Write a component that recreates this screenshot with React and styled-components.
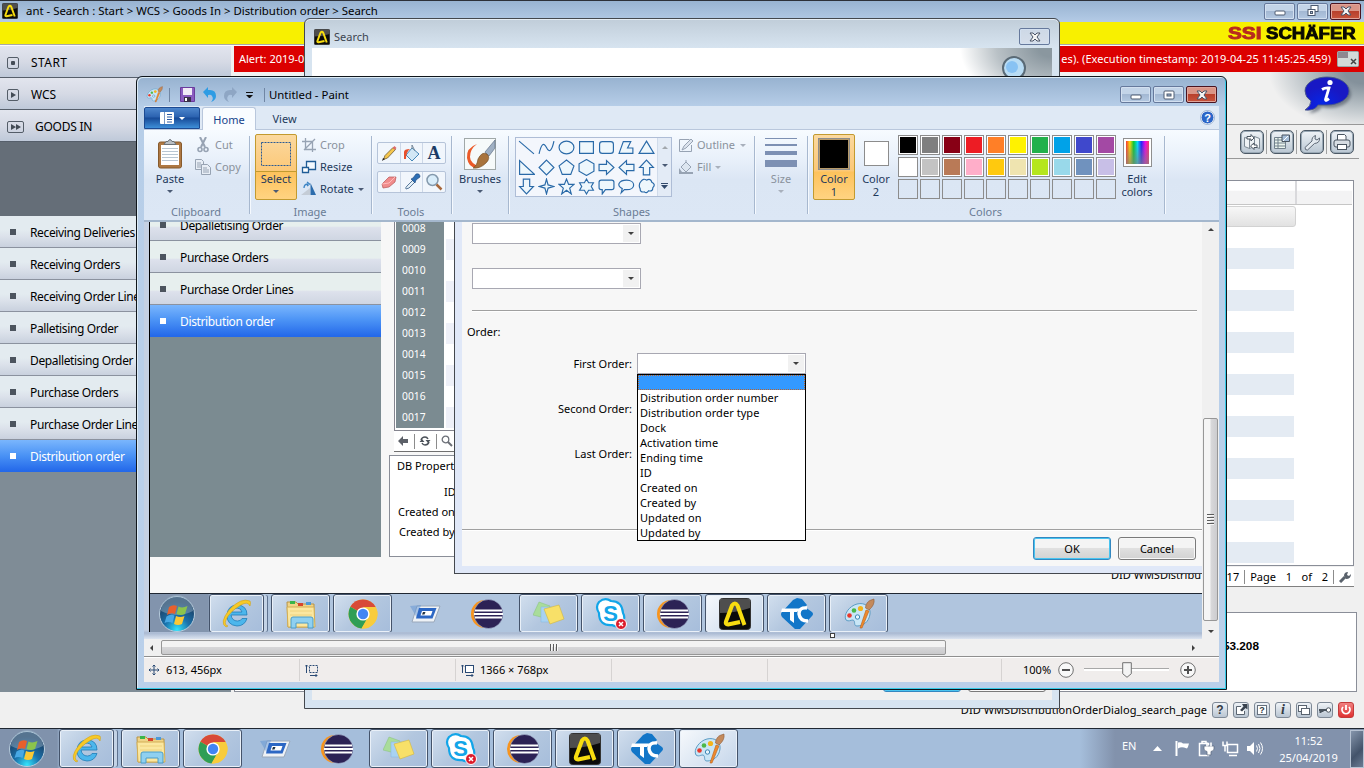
import React from "react";
import styled, { createGlobalStyle, css } from "styled-components";

const Global = createGlobalStyle`
  html, body { margin: 0; padding: 0; overflow: hidden; background: #f0f0f0; }
  * { box-sizing: border-box; }
  body { font: 11px/14px "Noto Sans", "Open Sans", sans-serif; color: #000; }
  svg { display: block; flex: none; }
`;

/* ---------- desktop ---------- */
const Desktop = styled.div`
  position: relative;
  width: 1364px;
  height: 768px;
  overflow: hidden;
  display: flex;
  flex-direction: column;
  white-space: nowrap;
`;
const AppTitle = styled.header`
  height: 22px;
  flex: none;
  display: flex;
  align-items: center;
  border-top: 1px solid #2c3038;
  background: linear-gradient(#98b3d1, #b4cbe6);
  font-size: 11.4px;
  padding: 0 3px 1px 2px;
  gap: 8px;
`;
const Spacer = styled.div`flex: 1;`;
const WinButtons = styled.div`
  display: flex;
  gap: 2px;
`;
const WinButton = styled.div`
  width: 31px;
  height: 17px;
  display: flex;
  align-items: center;
  justify-content: center;
  border: 1px solid ${(p) => (p.$close ? "#4a1420" : "#66799c")};
  border-radius: 2px;
  box-shadow: inset 0 0 0 1px ${(p) => (p.$close ? "#e0a49a" : "#d3e0f0")};
  background: ${(p) =>
    p.$close
      ? "linear-gradient(#d99587 0 45%, #b8402c 50%, #c8543c)"
      : p.$dim
      ? "linear-gradient(#cdd8e6, #d5deea)"
      : "linear-gradient(#c3d4e8 0 45%, #a3b8d3 50%, #b4c9e2)"};
`;
const Brand = styled.div`
  height: 24px;
  flex: none;
  display: flex;
  justify-content: flex-end;
  align-items: flex-start;
  background: #f8f000;
  border-bottom: 1px solid #fafafa;
  box-shadow: inset 0 -1px 0 #a8a8a8;
  padding: 3px 8px 0 0;
  gap: 4px;
  font: 700 16px/18px "Liberation Sans", Arial, sans-serif;
`;
const BrandWord = styled.span`
  display: block;
  width: ${(p) => p.$w}px;
  color: ${(p) => p.$color};
  -webkit-text-stroke: 0.9px ${(p) => p.$color};
  transform: scaleX(${(p) => p.$scale});
  transform-origin: 0 0;
`;
const AppBody = styled.div`
  flex: 1;
  min-height: 0;
  display: flex;
`;
const SideNav = styled.nav`
  width: 231px;
  flex: none;
  height: 646px;
  display: flex;
  flex-direction: column;
  background: #7f8c96;
  letter-spacing: -0.36px;
  font-size: 12px;
`;
const NavGroup = styled.div`
  height: 32px;
  flex: none;
  display: flex;
  align-items: center;
  gap: ${(p) => p.$gap || 12}px;
  padding: 2px 0 0 7px;
  border-bottom: 1px solid #565f6b;
  background: linear-gradient(#e2e5ee 0, #d6dae5 50%, #bfc9d9);
  letter-spacing: ${(p) => p.$track || 0}px;
`;
const NavGap = styled.div`
  height: 74px;
  flex: none;
  background: #656e78;
`;
const NavItem = styled.div`
  height: 32px;
  flex: none;
  display: flex;
  align-items: center;
  gap: 14px;
  padding: 2px 0 0 10px;
  border-bottom: 1px solid ${(p) => (p.$active ? "#2469ea" : "#8b929f")};
  color: ${(p) => (p.$active ? "#fff" : "#000")};
  background: ${(p) =>
    p.$active
      ? "linear-gradient(#7ab6fd, #4a92f5 50%, #2469ea)"
      : p.$inner
      ? "linear-gradient(#e7efee 0 55%, #dde1ec 60%, #cfd6e2)"
      : "linear-gradient(#e3ebf0 0 45%, #dce2eb 65%, #c9d1de)"};
  &::before {
    content: "";
    width: 6px;
    height: 6px;
    margin-top: -1px;
    background: ${(p) => (p.$active ? "#fff" : "#4c545e")};
  }
`;
const Main = styled.main`
  flex: 1;
  min-width: 0;
  display: flex;
  flex-direction: column;
`;
const AlertBar = styled.div`
  height: 26px;
  flex: none;
  margin-left: 3px;
  padding: 0 5px;
  display: flex;
  align-items: center;
  justify-content: space-between;
  color: #fff;
  background: #dc0000;
`;
const AlertRight = styled.div`
  display: flex;
  align-items: center;
  gap: 6px;
  letter-spacing: 0.04px;
`;
const PageHead = styled.div`
  height: 53px;
  flex: none;
  display: flex;
  justify-content: flex-end;
  padding: 3px 10px 0 0;
  border-bottom: 1px solid #989898;
  background: radial-gradient(ellipse 95px 58px at 100% 0, #84919b 0 20%, #b9c1c6 60%, #f0f0f0);
`;
const ToolRow = styled.div`
  height: 34px;
  flex: none;
  margin-right: 5px;
  display: flex;
  align-items: center;
  justify-content: flex-end;
  padding-right: 5px;
  border-bottom: 1px solid #989898;
  gap: 2px;
`;
const ToolButton = styled.div`
  width: 24px;
  height: 24px;
  display: flex;
  align-items: center;
  justify-content: center;
  border: 1px solid #4c5966;
  border-radius: 5px;
  box-shadow: inset 0 0 0 1px #9aa9b6;
  background: linear-gradient(#eff3f7, #b9c6d2);
`;
const ToolDivider = styled.i`
  width: 1px;
  height: 24px;
  margin-right: 1px;
  background: #a0a0a0;
`;
const Grid = styled.div`
  height: 386px;
  flex: none;
  margin: 21px 10px 0 3px;
  border: 1px solid #8a8e98;
  background: #fff;
`;
const GridHead = styled.div`
  height: 24px;
  display: flex;
  margin-right: 1px;
  border-bottom: 1px solid #c6c6c6;
  background: linear-gradient(#fff 0 40%, #f3f3f4 45%);
`;
const GridHeadCell = styled.div`
  width: 1062px;
  border-right: 2px solid #d9d9dc;
`;
const GridRow = styled.div`
  height: 21px;
  margin-right: 59px;
  background: ${(p) => (p.$shade ? "#e4ebf3" : "#fff")};
  ${(p) =>
    p.$sel &&
    css`
      margin: 1px 57px 0 0;
      border: 1px solid #d2d2d2;
      border-radius: 3px;
      background: linear-gradient(#f7f7f7, #e2e2e2);
    `}
`;
const Pager = styled.div`
  height: 20px;
  flex: none;
  margin: 1px 10px 0 3px;
  display: flex;
  align-items: center;
  justify-content: flex-end;
  gap: 5px;
  padding-right: 3px;
  background: #fff;
  border-bottom: 1px solid #808080;
  word-spacing: 6.8px;
`;
const Rule = styled.i`
  width: 1px;
  height: ${(p) => p.$h || 14}px;
  background: ${(p) => p.$c || "#8c8c8c"};
`;
const Detail = styled.div`
  height: 80px;
  flex: none;
  margin: 25px 7px 0 3px;
  padding: 26px 97px 0 0;
  text-align: right;
  font: 700 11.8px/14px "Liberation Sans", Arial, sans-serif;
  background: #fff;
  border: 1px solid #8a8e98;
`;
const StatusLine = styled.div`
  height: 36px;
  flex: none;
  display: flex;
  align-items: center;
  justify-content: flex-end;
  gap: 5px;
  padding-right: 10px;
  letter-spacing: 0.06px;
`;
const MiniButton = styled.div`
  width: 16px;
  height: 16px;
  display: flex;
  align-items: center;
  justify-content: center;
  border: 1px solid ${(p) => (p.$red ? "#c23a3a" : "#7e8996")};
  border-radius: 3px;
  background: ${(p) => (p.$red ? "linear-gradient(#f08080, #e03030)" : "linear-gradient(#eff3f7, #b9c5d2)")};
  font: ${(p) => (p.$it ? "italic" : "normal")} 700 ${(p) => (p.$it ? 14 : 12)}px/14px ${(p) => (p.$it ? '"Liberation Serif", serif' : '"Liberation Sans", sans-serif')};
  color: #333a44;
`;
const QuestionCard = styled.span`
  width: 10px;
  height: 10px;
  border: 1px solid #66707c;
  background: #fff;
  font-size: 9px;
  line-height: 8px;
  text-align: center;
`;

/* ---------- floating windows ---------- */
const SearchWindow = styled.section`
  position: absolute;
  left: 304px;
  top: 18px;
  width: 756px;
  height: 691px;
  display: flex;
  flex-direction: column;
  padding: 0 7px 8px;
  border: 1px solid #44484e;
  border-radius: 6px 6px 0 0;
  background: linear-gradient(#c0cdd9, #d7e4f0 29px, #d7e4f1);
  box-shadow: inset 0 1px 0 #e6edf4;
`;
const SearchTitle = styled.div`
  height: 29px;
  flex: none;
  display: flex;
  align-items: center;
  gap: 4px;
  padding: 6px 2px 0;
  color: #3c4450;
`;
const SearchBody = styled.div`
  flex: 1;
  display: flex;
  flex-direction: column;
  justify-content: space-between;
  background: #f0f0f0;
`;
const SearchHead = styled.div`
  height: 60px;
  display: flex;
  justify-content: flex-end;
  padding: 7px 22px 0 0;
  background: radial-gradient(ellipse 92px 60px at 100% 0, #8a979f 0 15%, #b9c1c6 60%, #fff);
`;
const ButtonRow = styled.div`
  height: 34px;
  display: flex;
  justify-content: flex-end;
  align-items: center;
  gap: 7px;
  padding: 0 6px 5px 0;
`;
const OrderButtons = styled(ButtonRow)`
  height: 35px;
  padding: 0 13px 0 0;
`;
const DialogButton = styled.div`
  width: 78px;
  height: 23px;
  display: flex;
  align-items: center;
  justify-content: center;
  border: 1px solid ${(p) => (p.$primary ? "#3387c0" : "#7a7a7a")};
  border-radius: 3px;
  box-shadow: inset 0 0 0 1px ${(p) => (p.$primary ? "#48c4f0" : "#f8f8f8")};
  background: linear-gradient(#f4f4f4 0 45%, #e0e0e0 50%, #d2d2d2);
`;

const PaintWindow = styled.section`
  position: absolute;
  left: 136px;
  top: 76px;
  width: 1091px;
  height: 614px;
  display: flex;
  flex-direction: column;
  padding: 0 7px 6px;
  border: 1px solid #10161c;
  border-radius: 6px 6px 0 0;
  background: linear-gradient(#97b2d0, #b7cee8 30px, #bad0ea);
  box-shadow: inset -1px -1px 0 #35cbe8, inset 1px 1px 0 #dcebf5;
`;
const PaintTitle = styled.div`
  height: 29px;
  flex: none;
  display: flex;
  align-items: center;
  padding: 6px 2px 0 2px;
  font-size: 11.4px;
`;
const QuickAccess = styled.div`
  display: flex;
  align-items: center;
  margin-right: 4px;
`;
const Slot = styled.span`
  display: flex;
  margin-left: ${(p) => p.$l || 0}px;
`;
const Gap = styled.div`
  flex: none;
  height: ${(p) => p.$h}px;
`;
const Tabs = styled.div`
  height: 24px;
  flex: none;
  display: flex;
  align-items: stretch;
  padding-top: 1px;
  background: #dfe9f5;
  border-bottom: 1px solid #b9c7dc;
  color: #1e395b;
`;
const FileTab = styled.div`
  width: 56px;
  display: flex;
  align-items: center;
  justify-content: center;
  gap: 5px;
  border: 1px solid #1c4a92;
  border-radius: 2px 2px 0 0;
  background: linear-gradient(#4d86cc, #2b62b0 45%, #174a97 50%, #3e8fd8);
`;
const Tab = styled.div`
  width: 57px;
  display: flex;
  align-items: center;
  justify-content: center;
  padding-top: 1px;
  ${(p) =>
    p.$on &&
    css`
      width: 54px;
      margin: 0 0 -1px 2px;
      border: 1px solid #b9c7dc;
      border-bottom: 0;
      border-radius: 3px 3px 0 0;
      background: #f9fcff;
      color: #15428b;
    `}
`;
const HelpSlot = styled.div`
  margin: 3px 4px 0 auto;
`;
const Ribbon = styled.div`
  height: 92px;
  flex: none;
  display: flex;
  border-bottom: 2px solid #a4b7cd;
  background: linear-gradient(#f7fbff, #e8f0fa 30px, #dbe6f4 50px, #dce7f5);
  color: #1e395b;
`;
const Group = styled.div`
  width: ${(p) => p.$w}px;
  display: flex;
  flex-direction: column;
  position: relative;
  padding: ${(p) => p.$pad || "4px 0 0 5px"};
  background: linear-gradient(#a7b8cf, #a7b8cf) no-repeat right 1px top 6px / 1px 78px,
    linear-gradient(#f5f9fe, #f5f9fe) no-repeat right 0 top 6px / 1px 78px;
`;
const GroupBody = styled.div`
  height: 71px;
  display: flex;
`;
const GroupLabel = styled.div`
  text-align: center;
  padding-right: 8px;
  color: #6a7c95;
  line-height: 14px;
`;
const BigButton = styled.div`
  width: ${(p) => p.$w || 42}px;
  height: 66px;
  flex: none;
  display: flex;
  flex-direction: column;
  align-items: center;
  text-align: center;
  line-height: 13px;
  color: ${(p) => (p.$off ? "#8a929c" : "#1e395b")};
  border: 1px solid ${(p) => (p.$on ? "#c29a30" : "transparent")};
  border-radius: 2px;
  ${(p) =>
    p.$on &&
    css`
      background: linear-gradient(#fbd9a0, #fcc877 36px, ${p.$split ? "#c29a30 36px, #c29a30 37px, " : ""}#fdc25c 37px, #ffd381);
    `}
`;
const BigIcon = styled.div`
  height: 37px;
  flex: none;
  display: flex;
  align-items: center;
  justify-content: center;
`;
const Rows = styled.div`
  display: flex;
  flex-direction: column;
  margin-left: ${(p) => p.$l || 0}px;
`;
const SmallCmd = styled.div`
  height: 22px;
  display: flex;
  align-items: center;
  gap: ${(p) => p.$gap || 3}px;
  color: ${(p) => (p.$off ? "#8a929c" : "#1e395b")};
`;
const Caret = styled.i`
  width: 0;
  height: 0;
  margin: ${(p) => p.$m || "0"};
  border: 3px solid transparent;
  border-top-color: ${(p) => p.$c || "#4a5a74"};
  border-bottom: 0;
`;
const ToolBox = styled.div`
  width: 69px;
  height: 22px;
  display: flex;
  border: 1px solid #b6c4d9;
  border-radius: 2px;
  background: #f1f6fc;
  margin-bottom: 7px;
`;
const ToolCell = styled.div`
  flex: 1;
  display: flex;
  align-items: center;
  justify-content: center;
  & + & { border-left: 1px solid #ccd7e7; }
`;
const Gallery = styled.div`
  width: 157px;
  height: 60px;
  display: flex;
  border: 1px solid #aebdd6;
  background: #f3f6fc;
`;
const ShapeGrid = styled.div`
  width: 141px;
  display: grid;
  grid-template-columns: repeat(7, 20px);
  grid-auto-rows: 19.6px;
  place-items: center;
`;
const GalleryBar = styled.div`
  flex: 1;
  display: flex;
  flex-direction: column;
  align-items: center;
  justify-content: space-around;
  background: #e3ebf6;
  border-left: 1px solid #d0dbea;
`;
const SizeBars = styled.div`
  display: flex;
  flex-direction: column;
  gap: 5px;
  width: 32px;
  margin-top: -3px;
`;
const SizeBar = styled.i`
  height: ${(p) => p.$h}px;
  background: #7d90b3;
`;
const Swatch = styled.div`
  width: ${(p) => p.$s}px;
  height: ${(p) => p.$s}px;
  border: 1px solid #8c8c8c;
  background: ${(p) => p.$c || "transparent"};
  box-shadow: ${(p) => (p.$c ? `inset 0 0 0 1px ${p.$in || "#fff"}` : "none")};
`;
const Palette = styled.div`
  display: grid;
  grid-template-columns: repeat(10, 20px);
  gap: 2px;
  margin: 1px 0 0 1px;
  align-content: start;
`;
const Rainbow = styled.div`
  width: 29px;
  height: 29px;
  margin-bottom: 2px;
  border: 1px solid #8f8f8f;
  box-shadow: inset 0 0 0 1px #fff;
  padding: 2px;
  background: linear-gradient(transparent, #808080b0) content-box,
    linear-gradient(90deg, #f33, #fd0, #0c3, #0df, #22f, #e0e, #f36) content-box, #fff;
`;

/* ---------- paint work area ---------- */
const Work = styled.div`
  height: 417px;
  flex: none;
  display: flex;
`;
const Viewport = styled.div`
  position: relative;
  flex: 1;
  min-width: 0;
  overflow: hidden;
  padding-left: 5px;
  background: linear-gradient(#c5d1e3 0 408px, #a9b9d2 411px, #dce4f0 417px);
`;
const Picture = styled.div`
  height: 410px;
  display: flex;
  flex-direction: column;
  overflow: hidden;
  border-left: 1px solid #000;
  background: #f7f7f7;
`;
const PicBody = styled.div`
  height: 371px;
  flex: none;
  display: flex;
  align-items: flex-start;
`;
const PicNav = styled(SideNav)`
  height: 335px;
  background: #7b8b91;
  overflow: hidden;
  & > :first-child { margin-top: -13px; }
`;
const PicData = styled.div`
  display: flex;
  flex-direction: column;
  width: 130px;
  margin-left: 8px;
`;
const NumTable = styled.div`
  margin-left: 5px;
  height: 209px;
  overflow: hidden;
  border: 1px solid #85858f;
  border-top: 0;
  padding-left: 1px;
  background: #fff;
`;
const NumRow = styled.div`
  height: 21px;
  display: flex;
  gap: 2px;
  &:first-child { margin-top: -4px; }
`;
const NumCell = styled.div`
  width: 48px;
  padding-left: 6px;
  line-height: 21px;
  font-size: 10.3px;
  color: #fff;
  background: #7b8b91;
`;
const NumRest = styled.div`
  flex: 1;
  background: ${(p) => (p.$shade ? "#eef0f8" : "#fff")};
`;
const PicTools = styled.div`
  margin-left: 5px;
  height: 21px;
  display: flex;
  align-items: center;
  gap: 4.5px;
  padding-left: 3px;
  background: #fff;
  border-bottom: 1px solid #707070;
`;
const DbPanel = styled.div`
  margin-top: 3px;
  height: 102px;
  border: 1px solid #8a8e98;
  background: #fff;
  padding: 0 0 0 7px;
`;
const DbLine = styled.div`
  height: 20px;
  line-height: 20px;
  padding-left: ${(p) => p.$l}px;
  margin-bottom: ${(p) => p.$b || 0}px;
  font-size: 11px;
`;
const PicFoot = styled.div`
  position: absolute;
  left: 967px;
  top: 346px;
`;
const OrderDialog = styled.div`
  position: absolute;
  left: 310px;
  top: 0;
  width: 755px;
  height: 352px;
  padding: 0 0 7px 7px;
  border: solid #44484e;
  border-width: 0 0 1px 1px;
  background: #e0e8f8;
`;
const OrderBody = styled.div`
  height: 344px;
  display: flex;
  flex-direction: column;
  background: #f7f7f7;
  padding-top: 1px;
`;
const Select = styled.div`
  width: 169px;
  height: 21px;
  margin: ${(p) => p.$m || "0"};
  display: flex;
  justify-content: flex-end;
  border: 1px solid #a8a8b2;
  background: #fff;
  padding: 1px;
`;
const SelectArrow = styled.div`
  width: 16px;
  display: flex;
  align-items: center;
  justify-content: center;
  background: #f1f1f1;
`;
const Divider = styled.div`
  height: 2px;
  flex: none;
  margin: ${(p) => p.$m};
  background: linear-gradient(#a0a0a0 50%, #fff 50%);
`;
const Legend = styled.div`
  padding: 13px 0 14px 5px;
`;
const Field = styled.div`
  height: 21px;
  flex: none;
  display: flex;
  align-items: center;
  gap: 5px;
  margin-bottom: 24px;
  &:last-of-type { margin-bottom: 0; }
`;
const FieldLabel = styled.div`
  width: 170px;
  text-align: right;
`;
const Menu = styled.ul`
  position: absolute;
  left: 182px;
  top: 152px;
  width: 169px;
  height: 167px;
  margin: 0;
  padding: 0;
  list-style: none;
  border: 1px solid #000;
  background: #fff;
  letter-spacing: 0.06px;
`;
const Option = styled.li`
  height: 15px;
  line-height: 15px;
  padding-left: 2px;
  ${(p) =>
    p.$on &&
    css`
      background: #3399ff;
      border: 1px dotted #b8642c;
    `}
`;
const VScroll = styled.div`
  width: 17px;
  display: flex;
  flex-direction: column;
  align-items: center;
  justify-content: space-between;
  padding: 6px 0 6px;
  background: #f0f0f0;
`;
const VThumb = styled.div`
  width: 15px;
  height: 203px;
  margin: 184px 0 6px;
  display: flex;
  flex-direction: column;
  align-items: center;
  justify-content: center;
  gap: 1px;
  border: 1px solid #979797;
  border-radius: 2px;
  background: linear-gradient(90deg, #f5f5f5 0 45%, #d8d8da 55%, #cccccf);
`;
const Grip = styled.i`
  width: ${(p) => (p.$v ? 2 : 7)}px;
  height: ${(p) => (p.$v ? 7 : 2)}px;
  background: linear-gradient(${(p) => (p.$v ? "90deg" : "180deg")}, #5c5c5c 50%, #f8f8f8 50%);
`;
const ArrowTip = styled.i`
  width: 0;
  height: 0;
  opacity: ${(p) => (p.$off ? 0.4 : 1)};
  border: 3.5px solid transparent;
  border-${(p) => p.$dir}-color: #404040;
  border-${(p) => ({ top: "bottom", bottom: "top", left: "right", right: "left" }[p.$dir])}: 0;
`;
const HScroll = styled.div`
  height: 17px;
  flex: none;
  display: flex;
  align-items: center;
  background: #f0f0f0;
  padding: 0 24px 0 6px;
`;
const HThumb = styled.div`
  width: 785px;
  height: 15px;
  margin: 0 auto 0 8px;
  display: flex;
  align-items: center;
  justify-content: center;
  gap: 1px;
  border: 1px solid #979797;
  border-radius: 2px;
  background: linear-gradient(#f3f3f3 0 45%, #d6d6d8 50%, #cacacc);
`;
const PaintStatus = styled.div`
  height: 26px;
  flex: none;
  display: flex;
  border-top: 1px solid #8f8f8f;
  box-shadow: inset 0 1px 0 #fff;
  background: #f0edec;
`;
const StatusCell = styled.div`
  width: ${(p) => p.$w}px;
  display: flex;
  align-items: center;
  gap: ${(p) => p.$gap || 5}px;
  padding-left: ${(p) => p.$pl || 5}px;
  margin: 2px 0 1px;
  border-right: ${(p) => (p.$end ? "0" : "1px solid #d6d3d2")};
`;
const ZoomTrack = styled.div`
  width: 85px;
  height: 16px;
  display: flex;
  align-items: center;
  justify-content: center;
  margin: 0 4px 0 3px;
  background: linear-gradient(#a8a8a8, #a8a8a8) no-repeat 0 6px / 100% 1px,
    linear-gradient(#fff, #fff) no-repeat 0 7px / 100% 2px;
`;
const Handle = styled.i`
  position: absolute;
  left: 686px;
  top: 411px;
  width: 5px;
  height: 5px;
  border: 1px solid #404040;
  background: #fff;
`;

/* ---------- taskbar ---------- */
const Bar = styled.div`
  height: 40px;
  flex: none;
  display: flex;
  align-items: stretch;
  border-top: 1px solid #1f2732;
  background: ${(p) =>
    p.$inner
      ? "linear-gradient(90deg, #8294ad 0 58px, #b0c5de 62px)"
      : "linear-gradient(90deg, #8092ac 0 57px, #a5bedb 61px, #a5bedb 1080px, #8292ac 1115px)"};
`;
const Orb = styled.div`
  width: 59px;
  display: flex;
  align-items: center;
  padding-left: 8px;
`;
const Task = styled.div`
  width: ${(p) => p.$w || 59}px;
  height: 39px;
  margin-right: ${(p) => p.$mr || 3}px;
  display: flex;
  align-items: center;
  justify-content: center;
  ${(p) =>
    p.$open &&
    css`
      border: 1px solid #44536a;
      border-radius: 3px;
      box-shadow: inset 0 0 0 1px #e9f0f8${p.$stack ? ", 4px 0 0 -1px #c3d3e6, 5px 0 0 -1px #5f7390" : ""};
      background: ${p.$on
        ? "linear-gradient(135deg, #f6f9fc, #dde7f3 50%, #c5d6ea)"
        : "linear-gradient(135deg, #d2dfee, #b3c7df 50%, #a6bddb)"};
    `}
`;
const Tray = styled.div`
  margin-left: auto;
  width: 246px;
  display: flex;
  align-items: center;
  color: #fff;
`;
const Lang = styled.span`
  margin: -6px 0 0 4px;
`;
const TrayIcons = styled.div`
  display: flex;
  align-items: center;
  gap: 7px;
  margin-left: 17px;
`;
const Clock = styled.div`
  width: 66px;
  margin-left: 12px;
  text-align: center;
  line-height: 17px;
`;
const ShowDesktop = styled.div`
  width: 14px;
  height: 38px;
  margin-left: auto;
  border: 1px solid #b6c2d2;
  background: linear-gradient(135deg, #8595ab, #43536a 60%, #6b7c94);
`;

/* ---------- drawings ---------- */
const Svg = ({ w = 16, h = w, box, children, ...r }) => (
  <svg width={w} height={h} viewBox={box || `0 0 ${w} ${h}`} fill="none" {...r}>{children}</svg>
);
const AntLogo = ({ s = 16 }) => (
  <Svg w={s} box="0 0 32 32">
    <rect x=".5" y=".5" width="31" height="31" rx="3" fill="#0b0b0b" stroke="#333" />
    <path d="M1 1h30v9Q16 15 1 15z" fill="#6b6b6b" opacity=".7" />
    <path d="M21 24L9 26.500q-3 0-2-3L13 7.500q3-4 5.500 0L25.500 27" stroke="#f7dc10" strokeWidth="4" strokeLinejoin="round" />
  </Svg>
);
const CloseX = ({ c = "#4a5468" }) => (
  <Svg w={12} h={10}>
    <path d="M1 1h3l2 2 2-2h3L8 5l3 4H8L6 7 4 9H1l3-4z" fill="#f4f4f4" stroke={c} strokeWidth="1" />
  </Svg>
);
const MinGlyph = () => <Svg w={12} h={10}><rect x="1" y="5" width="10" height="4" rx="1" fill="#fff" stroke="#4c5a70" /></Svg>;
const MaxGlyph = () => (
  <Svg w={12} h={10}><rect x="1" y="1" width="10" height="8" rx="1" fill="#fff" stroke="#4c5a70" /><rect x="4" y="4" width="4" height="2" fill="#9fb6d2" stroke="#4c5a70" /></Svg>
);
const RestoreGlyph = () => (
  <Svg w={12} h={12}><rect x="4" y=".5" width="7" height="6" fill="#fff" stroke="#4c5a70" /><rect x="1" y="4.500" width="7" height="6" fill="#fff" stroke="#4c5a70" /><rect x="3.500" y="6.500" width="2" height="2" stroke="#4c5a70" fill="#aebfd6" /></Svg>
);
const NavIcon = ({ k }) =>
  k === 2 ? (
    <Svg w={17} h={12}><rect x=".5" y=".5" width="16" height="11" rx="1.500" stroke="#545d68" /><path d="M4 3l5 3-5 3zM9 3l5 3-5 3z" fill="#444c56" /></Svg>
  ) : (
    <Svg w={12}><rect x=".5" y=".5" width="11" height="11" rx="1.500" stroke="#545d68" />{k ? <path d="M4 3l5 3-5 3z" fill="#444c56" /> : <rect x="4" y="4" width="4" height="4" rx="1" fill="#444c56" />}</Svg>
  );
const InfoBubble = () => (
  <Svg w={52} h={42}>
    <defs>
      <radialGradient id="ib" cx=".4" cy=".8"><stop offset="0" stopColor="#0626e6" /><stop offset="1" stopColor="#1818c4" /></radialGradient>
      <filter id="soft"><feGaussianBlur stdDeviation="1.6" /></filter>
    </defs>
    <path d="M27 5c12 0 22 6 22 14S39 33 27 33q-4 0-7-1-4 6-13 6 5-4 6-9z" fill="#404a58" opacity=".55" filter="url(#soft)" />
    <path d="M25 2c12 0 22 6 22 14S37 30 25 30q-5 0-9 0-3 6-13 5 6-4 6-9Q3 22 3 16C3 8 13 2 25 2z" fill="url(#ib)" stroke="#4c5a86" strokeWidth=".9" />
    <circle cx="28" cy="7.500" r="2.600" fill="#fff" />
    <path d="M20 14.500q3-2 7-1.500l-3.500 11.500q0 2 3.500-.8" stroke="#fff" strokeWidth="2.800" />
  </Svg>
);
const TB = "#4a5561";
const ToolArt = ({ k }) => (
  <Svg w={18}>
    {k === 0 && <><path d="M1.500 4.500l5 1v10l-5-2zM6.500 5.500l5-2v10l-5 2zM11.500 3.500l5 2v10l-5-2z" fill="#eef2f5" stroke="#7d8994" /><path d="M4 3.500h4v-2L11 5 8 8V6H4z" fill="#fff" stroke={TB} /><path d="M14 14.500h-3v2L7.500 13l3.500-3v2h3z" fill="#fff" stroke={TB} /></>}
    {k === 1 && <><path d="M1.500 4.500h11v11h-11zM1.500 7h11M1.500 10h11M1.500 13h11M5 5v10" fill="#eaf4ee" stroke="#71808c" /><path d="M9 2h7.500v6.500H9z" fill="#a5bdd8" stroke={TB} /><path d="M10 8l5-5" stroke="#fff" /></>}
    {k === 2 && <path d="M2 14.500L9 8Q8.500 4 12.500 2.500L12 6l2 1 2.500-2q.5 5-5 5.500L4.500 17Q2 17.500 2 14.500z" fill="#e4eaf0" stroke="#5e6976" />}
    {k === 3 && <><path d="M4.500 7V1.500h7L13 3v4" fill="#fff" stroke={TB} /><rect x="1" y="7" width="16" height="7" rx="2" fill="#d7dde3" stroke={TB} /><rect x="4.500" y="11.500" width="9" height="5" fill="#fff" stroke={TB} /></>}
  </Svg>
);
const Wrench = () => <Svg w={12}><path d="M1 11l5-5" stroke="#5a626c" strokeWidth="3" /><path d="M5 5q0-4 4-4L8 4l2 1 2-2q0 5-5 5z" fill="#5a626c" /></Svg>;
const Ball = () => (
  <Svg w={30}><circle cx="14" cy="13" r="11" fill="#b9dcf4" stroke="#5a6a76" strokeWidth="2" /><circle cx="12" cy="12" r="6" fill="#74b6f2" opacity=".7" /><path d="M22 21l6 6" stroke="#68747e" strokeWidth="3" /></Svg>
);
const AlertIcon = () => (
  <Svg w={22} h={16}><rect x=".5" y=".5" width="21" height="15" rx="1" fill="#d3dad8" stroke="#9aa" /><rect x="1" y="1" width="10" height="6" fill="#8e8890" /><path d="M14 8l5 5m0-5l-5 5" stroke="#444" strokeWidth="1.500" /></Svg>
);
const PaintIcon = ({ s = 32 }) => (
  <Svg w={s} box="0 0 32 32">
    <path d="M14 6c8-2 14 3 13 10-1 8-7 12-13 12-4 0-1-5-4-6-3 0-4 2-7 0C0 17 6 8 14 6z" fill="#c9e6f6" stroke="#5d9cc4" />
    <circle cx="6.500" cy="17.500" r="2.300" fill="#e8382c" /><circle cx="11" cy="12.500" r="2.300" fill="#4cb848" /><circle cx="17.500" cy="10.500" r="2.600" fill="#f4b41c" /><circle cx="14.500" cy="19" r="2.200" fill="#e8f5fc" stroke="#3c86b4" />
    <path d="M17 30l6-18 3 1-7 17z" fill="#ee8a2c" stroke="#b8601c" strokeWidth=".6" /><path d="M22.500 10q0-7 8.500-9 1 6-5 11z" fill="#c48a5c" stroke="#8d5c38" strokeWidth=".6" />
  </Svg>
);
const IE = () => (
  <Svg w={32}>
    <path d="M26 17H10q1 6 6.500 6 3.500 0 4.500-2.500h5Q23.500 28 16 28 6 27 6 17.500 6.500 7 16.500 7 26 7.500 26 17zM21 14q-1-4-5-4t-5.500 4z" fill="#4cb6ec" stroke="#1e7cb8" strokeWidth=".8" fillRule="evenodd" />
    <path d="M5 29Q-2 25 8 12 20-1 29 3q1 1 0 5Q27 3 20 7 8 14 5 22q-2 5 2 6z" fill="#f7c927" stroke="#c89a14" strokeWidth=".5" />
  </Svg>
);
const Explorer = () => (
  <Svg w={32}>
    <path d="M2 4h9l2 2h16v23H3z" fill="#f0d488" stroke="#b89444" /><path d="M5 3h5v3H5z" fill="#39b54a" /><path d="M13 5h5v3h-5z" fill="#d8452c" /><path d="M21 4h5v3h-5z" fill="#4c9ad8" />
    <path d="M2 9h27l1 20H3z" fill="#fbe7a0" stroke="#d3ae54" /><path d="M5 13h22M5 17h22" stroke="#efd27c" />
    <path d="M6 30V21q0-2 2-2h18q2 0 2 2v9h-5v-5H11v5z" fill="#8fd0f0" stroke="#4a9cc8" />
  </Svg>
);
const Chrome = () => (
  <Svg w={32}>
    <circle cx="16" cy="16" r="14.500" fill="#f8cc3c" /><path d="M16 16L3.400 8.800A14.500 14.500 0 0 1 28.600 9z" fill="#d84a38" /><path d="M3.400 8.800a14.500 14.500 0 0 0 11.100 21.600L21 19l-5-3z" fill="#2f9e56" /><path d="M28.600 9H16l5.500 10-7 11.400A14.500 14.500 0 0 0 28.600 9z" fill="#f8cc3c" />
    <circle cx="16" cy="16" r="6.600" fill="#fff" /><circle cx="16" cy="16" r="5.200" fill="#4285f4" />
  </Svg>
);
const Screen = () => (
  <Svg w={32} h={22}>
    <path d="M8 3h23l-6 16H3z" fill="#eef2f6" stroke="#9aa8ba" /><path d="M1 3l11-1-4 13z" fill="#5f93d4" opacity=".5" /><path d="M10 5h17.500l-4 10.500H7z" fill="#2c67c4" /><path d="M13 8h10.500l-1.600 4.500H11.500z" fill="#fff" /><path d="M14 9h2.500l-1 2.500H13z" fill="#234" />
  </Svg>
);
const Eclipse = () => (
  <Svg w={32}>
    <circle cx="14" cy="16" r="14" fill="#f7941e" /><circle cx="17.500" cy="16" r="14.500" fill="#2c2255" stroke="#b8c8e0" strokeWidth=".5" /><path d="M4 12.500h27M3 16h29M4 19.500h27" stroke="#fff" strokeWidth="1.800" />
  </Svg>
);
const Notes = () => (
  <Svg w={32}>
    <path d="M6 4l11 4-5 12-12-3z" fill="#a9dc9a" stroke="#86c078" strokeWidth=".5" /><path d="M8 9h11v15H8z" fill="#a8d2f2" stroke="#86b4dc" strokeWidth=".5" /><path d="M11 11l15-4 5 14-14 5z" fill="#f8e068" stroke="#d2b73c" strokeWidth=".6" />
  </Svg>
);
const Letter = styled.text`
  font: 700 ${(p) => p.$s}px ${(p) => (p.$serif ? '"Liberation Serif", serif' : '"Liberation Sans", Arial, sans-serif')};
  fill: ${(p) => p.$c};
  text-anchor: middle;
`;
const Skype = () => (
  <Svg w={32}>
    <path d="M4 4q6-5 12-1 11 0 12 12 3 5-1 11-5 4-10 1Q4 28 4 15 0 9 4 4z" fill="#fff" stroke="#12a5e8" strokeWidth="2.200" />
    <Letter x="15.500" y="22.500" $s={22} $c="#12a5e8">S</Letter>
    <circle cx="26" cy="26" r="5.500" fill="#dc1c2c" stroke="#fff" /><path d="M24 24l4 4m0-4l-4 4" stroke="#fff" strokeWidth="1.500" />
  </Svg>
);
const TC = () => (
  <Svg w={32}>
    <path d="M16 0l5 1 5 6-2 2 7 5q2 2 0 4L19 31h-5L1 19q-2-3 0-5L12 2z" fill="#1276c8" />
    <path d="M1 10.500h18l-3 3.500h-3v11l-4-3v-8H0z" fill="#fff" /><path d="M26 10q-8-1-8 6 1 7 9 7" stroke="#fff" strokeWidth="3.400" />
  </Svg>
);
const WinOrb = () => (
  <Svg w={38}>
    <defs><radialGradient id="orb" cx=".5" cy=".95" r=".8"><stop offset="0" stopColor="#32e4fc" /><stop offset=".45" stopColor="#1a72ac" /><stop offset="1" stopColor="#1c3c60" /></radialGradient></defs>
    <circle cx="19" cy="19" r="17.500" fill="url(#orb)" stroke="#b8ccdc" /><path d="M3 16a16 16 0 0 1 32 0Q19 24 3 16z" fill="#9db8cc" opacity=".45" />
    <path d="M11 12q4-3 8-1l-2 8q-4-2-8 1z" fill="#e8602c" /><path d="M20.500 11.500q4 2 9-.5l-2.500 8q-4 2-8.500 0z" fill="#8cc44c" /><path d="M8.500 21.500q4-3 8-1l-2 7.500q-4-2-8 0z" fill="#48a8e4" /><path d="M18 21q4 2 8.500 0l-2.500 8q-4 2-8 0z" fill="#fbc834" />
  </Svg>
);
const SHAPES = [
  "M1 2l14 12", "M1 14Q4 0 8 8t7-6", "M1 8a7 6 0 1 1 14 0 7 6 0 1 1-14 0z", "M1.500 2.500h13v11h-13z", "M4 2.500h8q2.500 0 2.500 2.500v6q0 2.500-2.500 2.500H4q-2.500 0-2.500-2.500V5Q1.500 2.500 4 2.500z", "M1 13.500l4-11h7l-3 6h5v5z", "M8 2l7 11.500H1z",
  "M1.500 1.500v13h14z", "M8 1l7 7-7 7-7-7z", "M8 1l7 5.500-3 8H4L1 6.500z", "M8 .5l7 4v7l-7 4-7-4v-7z", "M1 5h7V1.500L15 8l-7 6.500V11H1z", "M15 5H8V1.500L1 8l7 6.500V11h7z", "M5 15V8H1.500L8 1l6.500 7H11v7z",
  "M5 1v7H1.500L8 15l6.500-7H11V1z", "M8 1l1.500 5.500L15 8l-5.500 1.500L8 15l-1.500-5.500L1 8l5.500-1.500z", "M8 1l2 5h5l-4 3.500L12.500 15 8 11.500 3.500 15 5 9.500 1 6h5z", "M8 1l2 3.500h4.500L12.500 8l2 3.500H10L8 15l-2-3.500H1.500l2-3.500-2-3.500H6z", "M3 2h10q2 0 2 2v5q0 2-2 2H7l-3 4v-4H3q-2 0-2-2V4q0-2 2-2z", "M8 2c9 0 9 9 0 9H6l-3 3 1-4C-2 7 1 2 8 2z", "M3 3q2-3 5-1 4-2 5 2 4 2 1 5 0 4-4 3-2 3-4 1-4 1-4-3-2-4 1-7z",
];
const ToolGlyph = ({ k }) => (
  <Svg w={18}>
    {k === 0 && <><path d="M3.500 15.500l1.500-4L13 3.500l2.500 2-8 8.500z" fill="#f5c64c" stroke="#6d5a34" strokeWidth=".8" /><path d="M12.500 4l2-2 2 2-1.500 1.800z" fill="#dc6c6c" /><path d="M2 17l1-3 2 1z" fill="#222" /></>}
    {k === 1 && <><path d="M9 4l7 6-7 7-6-6z" fill="#d2e7f5" stroke="#4688b8" /><path d="M9 5V1l3 6" stroke="#789" /><path d="M1 15V8q0-3 6-3-4 3-4 10z" fill="#e8502c" /></>}
    {k === 2 && <Letter x="9" y="15" $s={18} $c="#1c3c66" $serif>A</Letter>}
    {k === 3 && <><path d="M2 11l7-7h7l-1 5-6 5-6 1z" fill="#f08c8c" stroke="#b85454" strokeWidth=".7" /><path d="M2 11l7-1 6-6" stroke="#fbb" /></>}
    {k === 4 && <><path d="M3 16q-1-1 1-3l6-6 2 2-6 6z" fill="#e4f0f8" stroke="#5a7a9c" /><path d="M8 6l2-1 3-4q4-1 4 3l-4 3-1 3z" fill="#2e6fb4" stroke="#1b4578" strokeWidth=".6" /></>}
    {k === 5 && <><circle cx="7.500" cy="7" r="5.500" fill="#d9edfa" stroke="#8499ac" strokeWidth="1.500" /><path d="M11.500 11.500l5 5" stroke="#a8683c" strokeWidth="2.500" /></>}
  </Svg>
);
const G = "#97a3b3";
const CmdIcon = ({ k }) => (
  <Svg w={16}>
    {k === "cut" && <><path d="M5 0l5 10M11 0L6 10" stroke={G} strokeWidth="2" /><circle cx="5" cy="12.500" r="2" stroke={G} strokeWidth="1.600" /><circle cx="11" cy="12.500" r="2" stroke={G} strokeWidth="1.600" /></>}
    {k === "copy" && <><path d="M.5.500h6l2 2v8h-8zM2 4h4M2 6h4M2 8h4" fill="#e8eef6" stroke={G} /><path d="M6.500 5.500h6l3 3v7h-9zM8 9h4M8 11h6M8 13h6" fill="#e8eef6" stroke={G} /></>}
    {k === "crop" && <path d="M4.500 1v11.500H15M1 4.500h10.500V15M3 13L14 2" stroke={G} strokeWidth="1.300" />}
    {k === "resize" && <><path d="M5.500 2.500h9v8h-9z" fill="#f2f9ff" stroke="#1f5c96" strokeWidth="1.300" /><path d="M1.500 8.500h6v5h-6z" fill="#fff" stroke="#1f5c96" strokeWidth="1.300" /></>}
    {k === "rotate" && <><path d="M0 14l9-7v7z" fill="#c4ccd6" /><path d="M9.500 2l5.500 12H9.500z" fill="#2c6cac" /><path d="M3 7q0-4 4-4M6 1l2.500 2L6 5" stroke="#3c84c4" strokeWidth="1.300" /></>}
    {k === "outline" && <><path d="M1.500 2.500h10M1.500 2.500v12h12V8" stroke={G} /><path d="M4 13l2-4 7-7 2 2-7 7z" fill="#dde4ee" stroke={G} /></>}
    {k === "fill" && <><path d="M8 3l5 5-5 5-5-5z" fill="#dde6f0" stroke={G} /><path d="M8 4V1" stroke={G} /><path d="M1 15V9l3 4h11v2z" fill={G} /></>}
  </Svg>
);
const PasteIcon = () => (
  <Svg w={26} h={32}>
    <rect x="1.500" y="4" width="23" height="26" rx="2" fill="#ae7843" stroke="#875a2c" /><rect x="4" y="7" width="18" height="20" fill="#fff" /><path d="M5 10.500h16M5 13.500h16M5 16.500h16M5 19.500h16M5 22.500h16" stroke="#b9c6d2" /><path d="M7 6.500l2-3h2q2-4 4 0h2l2 3z" fill="#b8bec4" stroke="#6a7076" />
  </Svg>
);
const BrushArt = () => (
  <Svg w={32}>
    <rect x=".5" y=".5" width="31" height="31" fill="#f6fafa" stroke="#a0a8a8" /><path d="M13 6Q2 10 3 20q2 12 13 9-10-4-10-10 0-8 7-13z" fill="#ec5a28" /><path d="M31 2l-10 12 4 4 6-8z" fill="#9fb0c4" stroke="#54657c" strokeWidth=".6" /><path d="M14 21q4-8 9-5 4 4-1 9-6 6-13 5 4-2 5-9z" fill="#a8733c" stroke="#6b451c" strokeWidth=".6" />
  </Svg>
);
const MarqueeArt = () => <Svg w={32} h={26}><rect x="1.500" y="1.500" width="29" height="23" stroke="#2a5a94" strokeDasharray="2 1" /></Svg>;
const SaveIcon = () => <Svg w={15}><path d="M.5.500h14v14h-14z" fill="#8a5cc0" stroke="#6a3c9c" /><path d="M3 1h9v7H3z" fill="#f0eaf6" /><path d="M4 10h7v5H4z" fill="#3a3048" /><path d="M5 11h2v3H5z" fill="#fff" /></Svg>;
const Undo = ({ c, flip }) => (
  <Svg w={15} h={15}><g transform={flip ? "translate(15 0) scale(-1 1)" : undefined}><path d="M1 5l5-5v3q8-1 8 6 0 4-5 6 3-3 1-6-1-2-4-1v3z" fill={c} /></g></Svg>
);
const Help = () => <Svg w={15}><circle cx="7.500" cy="7.500" r="6.500" fill="#2c66c8" stroke="#fff" /><circle cx="7.500" cy="7.500" r="7" stroke="#8ca4c8" strokeWidth=".8" /><Letter x="7.500" y="11.500" $s={11} $c="#fff">?</Letter></Svg>;
const FileGlyph = () => <Svg w={14} h={12}><rect width="14" height="12" rx="1" fill="#fff" /><path d="M4.500 0v12" stroke="#7a98c4" /><path d="M7 2.500h5M7 5h5M7 7.500h5M7 10h5" stroke="#2a5aa4" /></Svg>;
const CrossArrows = () => <Svg w={12}><path d="M6 1v10M1 6h10M4.500 2.500L6 1l1.500 1.500M4.500 9.500L6 11l1.500-1.500M2.500 4.500L1 6l1.500 1.500M9.500 4.500L11 6 9.500 7.500" stroke="#2a4a74" /></Svg>;
const DimGlyph = ({ dash }) => (
  <Svg w={13}><rect x="4.500" y="1.500" width="8" height="7" fill={dash ? "none" : "#fff"} stroke="#2a4a74" strokeDasharray={dash ? "2 1" : undefined} /><path d="M1.500 1v8M0 2.500L1.500 1 3 2.500M5 11.500h7M10.500 10l1.500 1.500-1.500 1.500" stroke="#2a4a74" /></Svg>
);
const RoundBtn = ({ plus }) => <Svg w={16}><circle cx="8" cy="8" r="7.300" fill="#f8f8f8" stroke="#707070" /><path d={plus ? "M4 8h8M8 4v8" : "M4 8h8"} stroke="#505050" strokeWidth="2" /></Svg>;
const Thumb = () => <Svg w={10} h={16}><path d="M.7.700h8.600v11L5 15.300.7 11.700z" fill="#f4f4f4" stroke="#707070" /></Svg>;
const MiniArt = ({ k }) => (
  <Svg w={14}>
    {k === "out" && <><path d="M7 3.500H2.500v8h8V8" fill="#fff" stroke="#5a6470" /><path d="M6 7l3.500-3.500L8 1h5.500v5.500l-2-1.500L8 8.500z" fill="#39424e" /></>}
    {k === "win" && <><rect x="1.500" y="2.500" width="8" height="6" fill="#fff" stroke="#59636f" /><rect x="4.500" y="5.500" width="8" height="6" fill="#fff" stroke="#59636f" /></>}
    {k === "key" && <><path d="M1 7h8M2.500 7v3M4.500 7v2" stroke="#4a545e" strokeWidth="2" /><circle cx="10.500" cy="7" r="2.200" stroke="#4a545e" fill="#fff" /></>}
    {k === "pow" && <path d="M4 4a4 4 0 1 0 6 0M7 2v5" stroke="#fff" strokeWidth="1.800" />}
  </Svg>
);
const TrayArt = ({ k }) => (
  <Svg w={17}>
    {k === 0 && <><path d="M2.500 1v15" stroke="#fff" strokeWidth="2" /><path d="M4 2.500q3-1 5 1h6q-1 4-2 5l-3-1q-3-1-6 1z" fill="#fff" /></>}
    {k === 1 && <><path d="M1.500 3.500h9v12h-9zM4 3V1.500h4V3" stroke="#fff" strokeWidth="1.500" /><path d="M6 6h10v3q0 2-3 2.500V15H9v-3.500Q6 11 6 9z" fill="#fff" stroke="#5d6c84" strokeWidth=".8" /><path d="M9 2.500v4M13 2.500v4" stroke="#fff" strokeWidth="1.600" /></>}
    {k === 2 && <><path d="M5.500 4.500h10v8h-10zM7 15.500h8" stroke="#fff" strokeWidth="1.500" /><path d="M1 1.500v4h4v-4M3 5.500v6" stroke="#fff" strokeWidth="1.500" /></>}
    {k === 3 && <><path d="M1 6h3l4-4v13l-4-4H1z" fill="#fff" /><path d="M10.500 5.500q2 3 0 6M12.500 4q3 4.500 0 9M14.500 2.500q4 6 0 12" stroke="#fff" /></>}
  </Svg>
);

/* ---------- composition ---------- */
const PALETTE = ["#000", "#7f7f7f", "#880015", "#ed1c24", "#ff7f27", "#fff200", "#22b14c", "#00a2e8", "#3f48cc", "#a349a4", "#fff", "#c3c3c3", "#b97a57", "#ffaec9", "#ffc90e", "#efe4b0", "#b5e61d", "#99d9ea", "#7092be", "#c8bfe7", ...Array(10).fill(null)];
const OPTIONS = ["Distribution order number", "Distribution order type", "Dock", "Activation time", "Ending time", "ID", "Created on", "Created by", "Updated on", "Updated by"];
const NAV = ["Receiving Deliveries", "Receiving Orders", "Receiving Order Lines", "Palletising Order", "Depalletising Order", "Purchase Orders", "Purchase Order Lines", "Distribution order"];

const Taskbar = ({ inner }) => (
  <Bar $inner={inner}>
    <Orb><WinOrb /></Orb>
    <Task $open $stack $w={55} $mr={7}><IE /></Task>
    <Task $open><Explorer /></Task>
    <Task $open><Chrome /></Task>
    <Task><Screen /></Task>
    <Task><Eclipse /></Task>
    <Task $open><Notes /></Task>
    <Task $open><Skype /></Task>
    <Task $open><Eclipse /></Task>
    <Task $open $on={inner}><AntLogo s={32} /></Task>
    <Task $open><TC /></Task>
    <Task $open $on={!inner}><PaintIcon /></Task>
    {!inner && (
      <Tray>
        <Lang>EN</Lang>
        <TrayIcons>
          <Svg w={9} h={5}><path d="M0 5l4.500-5L9 5z" fill="#fff" /></Svg>
          <Slot $l={5}><TrayArt k={0} /></Slot><TrayArt k={1} /><TrayArt k={2} /><TrayArt k={3} />
        </TrayIcons>
        <Clock>11:52<br />25/04/2019</Clock>
        <ShowDesktop />
      </Tray>
    )}
  </Bar>
);

const Combo = ({ m }) => <Select $m={m}><SelectArrow><ArrowTip $dir="top" /></SelectArrow></Select>;

const RibbonBar = () => (
  <Ribbon>
    <Group $w={107}>
      <GroupBody>
        <BigButton><BigIcon><PasteIcon /></BigIcon>Paste<Caret $m="5px 0 0" /></BigButton>
        <Rows $l={4}>
          <SmallCmd $off $gap={4}><CmdIcon k="cut" />Cut</SmallCmd>
          <SmallCmd $off $gap={4}><CmdIcon k="copy" />Copy</SmallCmd>
        </Rows>
      </GroupBody>
      <GroupLabel>Clipboard</GroupLabel>
    </Group>
    <Group $w={122} $pad="4px 0 0 4px">
      <GroupBody>
        <BigButton $on $split><BigIcon><MarqueeArt /></BigIcon>Select<Caret $m="5px 0 0" /></BigButton>
        <Rows $l={4}>
          <SmallCmd $off><CmdIcon k="crop" />Crop</SmallCmd>
          <SmallCmd><CmdIcon k="resize" />Resize</SmallCmd>
          <SmallCmd><CmdIcon k="rotate" />Rotate<Caret $m="0 0 0 1px" /></SmallCmd>
        </Rows>
      </GroupBody>
      <GroupLabel>Image</GroupLabel>
    </Group>
    <Group $w={80} $pad="4px 0 0 4px">
      <GroupBody>
        <Rows>
          <Gap $h={8} />
          <ToolBox>{[0, 1, 2].map((k) => <ToolCell key={k}><ToolGlyph k={k} /></ToolCell>)}</ToolBox>
          <ToolBox>{[3, 4, 5].map((k) => <ToolCell key={k}><ToolGlyph k={k} /></ToolCell>)}</ToolBox>
        </Rows>
      </GroupBody>
      <GroupLabel>Tools</GroupLabel>
    </Group>
    <Group $w={57} $pad="4px 0 0 5px">
      <BigButton $w={44}><BigIcon><BrushArt /></BigIcon>Brushes<Caret $m="5px 0 0" /></BigButton>
    </Group>
    <Group $w={246} $pad="4px 0 0 5px">
      <GroupBody>
        <Rows>
          <Gap $h={3} />
          <Gallery>
            <ShapeGrid>
              {SHAPES.map((d, i) => (
                <Svg w={17} box="0 0 16 16" key={i}><path d={d} stroke="#2a6aa8" strokeWidth="1.100" fill={i < 2 ? "none" : "#eef7fc"} /></Svg>
              ))}
            </ShapeGrid>
            <GalleryBar><ArrowTip $dir="bottom" $off /><Caret /><Svg w={7} h={7}><path d="M0 1.500h7" stroke="#334a6c" /><path d="M0 3h7L3.500 7z" fill="#334a6c" /></Svg></GalleryBar>
          </Gallery>
        </Rows>
        <Rows $l={6}>
          <SmallCmd $off><CmdIcon k="outline" />Outline<Caret $c="#a8b0bc" $m="0 0 0 2px" /></SmallCmd>
          <SmallCmd $off><CmdIcon k="fill" />Fill<Caret $c="#a8b0bc" $m="0 0 0 1px" /></SmallCmd>
        </Rows>
      </GroupBody>
      <GroupLabel>Shapes</GroupLabel>
    </Group>
    <Group $w={53} $pad="4px 0 0 3px">
      <BigButton $off $w={44}>
        <BigIcon><SizeBars><SizeBar $h={1} /><SizeBar $h={2} /><SizeBar $h={4} /><SizeBar $h={7} /></SizeBars></BigIcon>
        Size<Caret $c="#a8b0bc" $m="5px 0 0" />
      </BigButton>
    </Group>
    <Group $w={357} $pad="4px 0 0 4px">
      <GroupBody>
        <BigButton $on><BigIcon><Swatch $s={32} $c="#000" $in="#b89a68" /></BigIcon>Color<br />1</BigButton>
        <BigButton><BigIcon><Swatch $s={25} $c="#fff" /></BigIcon>Color<br />2</BigButton>
        <Palette>{PALETTE.map((c, i) => <Swatch key={i} $s={20} $c={c} />)}</Palette>
        <BigButton $w={42}><BigIcon><Rainbow /></BigIcon>Edit<br />colors</BigButton>
      </GroupBody>
      <GroupLabel>Colors</GroupLabel>
    </Group>
  </Ribbon>
);

const CanvasView = () => (
  <Viewport>
    <Picture>
      <PicBody>
        <PicNav>
          {NAV.slice(4).map((t, i) => <NavItem key={t} $inner $active={i === 3}>{t}</NavItem>)}
        </PicNav>
        <PicData>
          <NumTable>
            {Array.from({ length: 10 }, (_, i) => (
              <NumRow key={i}><NumCell>{String(i + 8).padStart(4, "0")}</NumCell><NumRest $shade={i % 2 === 1} /></NumRow>
            ))}
          </NumTable>
          <PicTools>
            <Svg w={12}><path d="M6 1v3h5v4H6v3L1 6z" fill="#5c6068" /></Svg><Rule $h={15} />
            <Svg w={12}><path d="M2 5q1-3 4-3 2 0 3 2M10 7q-1 3-4 3-2 0-3-2" stroke="#4c525a" strokeWidth="1.500" /><path d="M6.500 5h5L9 8zM.5 7h5L3 4z" fill="#4c525a" /></Svg><Rule $h={15} />
            <Svg w={12}><circle cx="4.500" cy="4.500" r="3.300" stroke="#6c7078" strokeWidth="1.300" /><path d="M7 7l4 4" stroke="#6c7078" strokeWidth="2" /></Svg>
          </PicTools>
          <DbPanel>
            <DbLine $l={0} $b={6}>DB Propert</DbLine>
            <DbLine $l={47}>ID</DbLine>
            <DbLine $l={1}>Created on</DbLine>
            <DbLine $l={2}>Created by</DbLine>
          </DbPanel>
        </PicData>
      </PicBody>
      <Taskbar inner />
    </Picture>
    <PicFoot>DID WMSDistribu</PicFoot>
    <OrderDialog>
      <OrderBody>
        <Combo m="0 0 0 10px" />
        <Combo m="24px 0 0 10px" />
        <Divider $m="21px 12px 0 10px" />
        <Legend>Order:</Legend>
        <Field><FieldLabel>First Order:</FieldLabel><Combo /></Field>
        <Field><FieldLabel>Second Order:</FieldLabel></Field>
        <Field><FieldLabel>Last Order:</FieldLabel></Field>
        <Spacer />
        <Divider $m="0" />
        <OrderButtons>
          <DialogButton $primary>OK</DialogButton>
          <DialogButton>Cancel</DialogButton>
        </OrderButtons>
      </OrderBody>
      <Menu>
        <Option $on />
        {OPTIONS.map((o) => <Option key={o}>{o}</Option>)}
      </Menu>
    </OrderDialog>
    <Handle />
  </Viewport>
);

export default function App() {
  return (
    <>
      <Global />
      <Desktop>
        <AppTitle>
          <AntLogo />
          ant - Search : Start &gt; WCS &gt; Goods In &gt; Distribution order &gt; Search
          <Spacer />
          <WinButtons>
            <WinButton><MinGlyph /></WinButton>
            <WinButton><RestoreGlyph /></WinButton>
            <WinButton $close><CloseX /></WinButton>
          </WinButtons>
        </AppTitle>
        <Brand>
          <BrandWord $w={34} $scale={1.3} $color="#b82a1e">SSI</BrandWord>
          <BrandWord $w={90} $scale={1.16} $color="#0a0a00">SCHÄFER</BrandWord>
        </Brand>
        <AppBody>
          <SideNav>
            <NavGroup $track={0.45}><NavIcon k={0} />START</NavGroup>
            <NavGroup><NavIcon k={1} />WCS</NavGroup>
            <NavGroup $track={-0.25} $gap={11}><NavIcon k={2} />GOODS IN</NavGroup>
            <NavGap />
            {NAV.map((t, i) => <NavItem key={t} $active={i === 7}>{t}</NavItem>)}
          </SideNav>
          <Main>
            <AlertBar>
              <span>Alert: 2019-04</span>
              <AlertRight>es). (Execution timestamp: 2019-04-25 11:45:25.459)<AlertIcon /></AlertRight>
            </AlertBar>
            <PageHead><InfoBubble /></PageHead>
            <ToolRow>
              {[0, 1, 2, 3].map((k) => (
                <React.Fragment key={k}>{k > 0 && <ToolDivider />}<ToolButton><ToolArt k={k} /></ToolButton></React.Fragment>
              ))}
            </ToolRow>
            <Grid>
              <GridHead><GridHeadCell /></GridHead>
              <GridRow $sel />
              {Array.from({ length: 16 }, (_, i) => <GridRow key={i} $shade={i % 2 === 1} />)}
            </Grid>
            <Pager>17<Rule />Page 1 of 2<Rule /><Wrench /></Pager>
            <Detail>53.208</Detail>
            <StatusLine>
              DID WMSDistributionOrderDialog_search_page
              <MiniButton>?</MiniButton>
              <MiniButton><MiniArt k="out" /></MiniButton>
              <MiniButton><QuestionCard>?</QuestionCard></MiniButton>
              <MiniButton $it>i</MiniButton>
              <MiniButton><MiniArt k="win" /></MiniButton>
              <MiniButton><MiniArt k="key" /></MiniButton>
              <MiniButton $red><MiniArt k="pow" /></MiniButton>
            </StatusLine>
          </Main>
        </AppBody>
        <Taskbar />

        <SearchWindow>
          <SearchTitle><AntLogo />Search<Spacer /><WinButton $dim><CloseX /></WinButton></SearchTitle>
          <SearchBody>
            <SearchHead><Ball /></SearchHead>
            <ButtonRow><DialogButton $primary /><DialogButton /></ButtonRow>
          </SearchBody>
        </SearchWindow>

        <PaintWindow>
          <PaintTitle>
            <QuickAccess>
              <PaintIcon s={17} />
              <Slot $l={6}><Rule $c="#7086a4" /></Slot>
              <Slot $l={10}><SaveIcon /></Slot>
              <Slot $l={7}><Undo c="#2e9ce4" /></Slot>
              <Slot $l={6}><Undo c="#8ea6c4" flip /></Slot>
              <Slot $l={8}><Svg w={7} h={7}><path d="M0 1.500h7" stroke="#111" /><path d="M0 4h7L3.500 7.500z" fill="#111" /></Svg></Slot>
              <Slot $l={11}><Rule $c="#7086a4" /></Slot>
            </QuickAccess>
            Untitled - Paint
            <Spacer />
            <WinButtons>
              <WinButton><MinGlyph /></WinButton>
              <WinButton><MaxGlyph /></WinButton>
              <WinButton $close><CloseX /></WinButton>
            </WinButtons>
          </PaintTitle>
          <Tabs>
            <FileTab><FileGlyph /><Caret $c="#fff" /></FileTab>
            <Tab $on>Home</Tab>
            <Tab>View</Tab>
            <HelpSlot><Help /></HelpSlot>
          </Tabs>
          <RibbonBar />
          <Work>
            <CanvasView />
            <VScroll>
              <ArrowTip $dir="bottom" />
              <VThumb><Grip /><Grip /><Grip /><Grip /></VThumb>
              <ArrowTip $dir="top" />
            </VScroll>
          </Work>
          <HScroll>
            <ArrowTip $dir="right" />
            <HThumb><Grip $v /><Grip $v /><Grip $v /></HThumb>
            <ArrowTip $dir="left" />
          </HScroll>
          <PaintStatus>
            <StatusCell $w={156} $gap={6} $pl={4}><CrossArrows />613, 456px</StatusCell>
            <StatusCell $w={156}><DimGlyph dash /></StatusCell>
            <StatusCell $w={156} $gap={6}><DimGlyph />1366 × 768px</StatusCell>
            <StatusCell $w={156} />
            <StatusCell $w={234} />
            <StatusCell $end $pl={21} $gap={7} $w={217}>100%<RoundBtn /><ZoomTrack><Thumb /></ZoomTrack><RoundBtn plus /></StatusCell>
          </PaintStatus>
        </PaintWindow>
      </Desktop>
    </>
  );
}
